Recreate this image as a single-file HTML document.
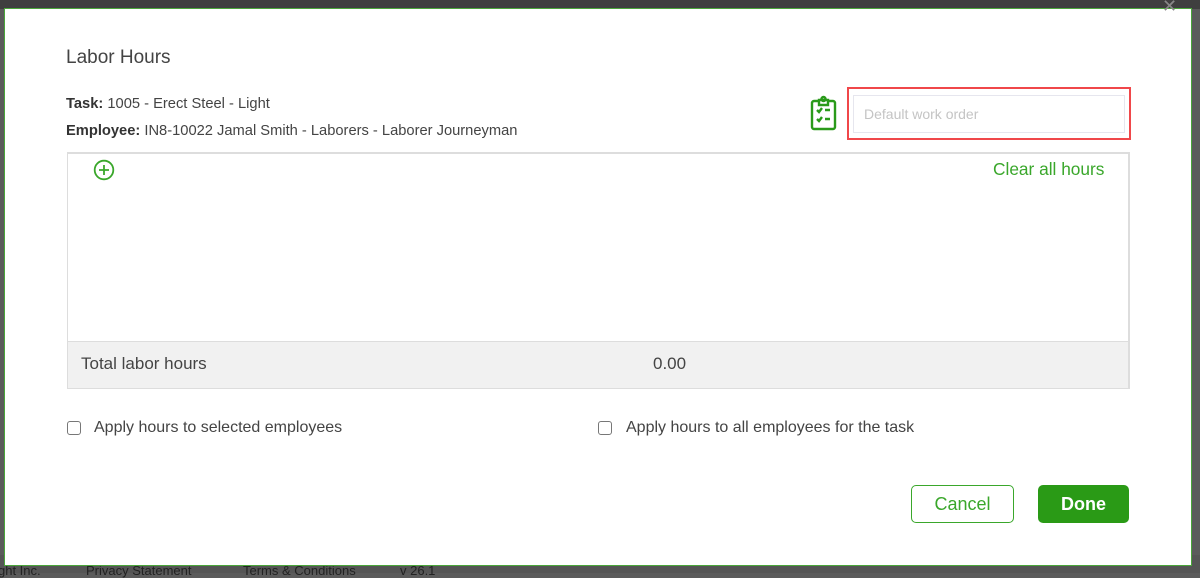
<!DOCTYPE html>
<html><head><meta charset="utf-8"><style>
*{margin:0;padding:0;box-sizing:border-box}
body{width:1200px;height:573px;background:#5b5b5b;position:relative;overflow:hidden;font-family:"Liberation Sans",sans-serif;color:#444}
.top{position:absolute;left:0;top:0;width:1200px;height:9px;background:#3f3f3f}
.modal{position:absolute;left:4px;top:8px;width:1188px;height:558px;background:#fff;border:1px solid #4aa63a}
.abs{position:absolute}
</style></head><body>
<div class="top"></div>
<div class="abs" style="left:0;top:555px;width:1200px;height:18px;background:#555;font-size:13px;color:#222">
<span class="abs" style="left:-2px;top:8px">ght Inc.</span><span class="abs" style="left:86px;top:8px">Privacy Statement</span><span class="abs" style="left:243px;top:8px">Terms &amp; Conditions</span><span class="abs" style="left:400px;top:8px">v 26.1</span></div>
<div class="modal"></div>
<div class="abs" style="left:1162px;top:-4px;color:#888;font-size:18px">✕</div>
<div class="abs" style="left:66px;top:47px;font-size:19px;color:#444">Labor Hours</div>
<div class="abs" style="left:66px;top:96px;font-size:14.7px"><b style="color:#333">Task:</b> 1005 - Erect Steel - Light</div>
<div class="abs" style="left:66px;top:123px;font-size:14.7px"><b style="color:#333">Employee:</b> IN8-10022 Jamal Smith - Laborers - Laborer Journeyman</div>
<svg class="abs" style="left:810px;top:95px" width="28" height="36" viewBox="0 0 28 36" fill="none" stroke="#2a9a1a" stroke-width="2.4">
<rect x="2" y="6" width="23" height="28" rx="2"/><path d="M9 5h9v5H9z" fill="#fff"/><circle cx="13.5" cy="4" r="2"/>
<path d="M7 15l2 2 3-4M7 24l2 2 3-4M15 15h5M15 24h5"/></svg>
<div class="abs" style="left:847px;top:87px;width:284px;height:53px;border:2px solid #f0474a"></div>
<div class="abs" style="left:853px;top:95px;width:272px;height:38px;border:1px solid #e6e6ee;font-size:14px;color:#c4c4c4;padding:10px 0 0 10px">Default work order</div>
<div class="abs" style="left:67px;top:152px;width:1063px;height:237px;border:1px solid #ddd;border-width:2px 2px 1px 1px"></div>
<svg class="abs" style="left:93px;top:159px" width="22" height="22" viewBox="0 0 22 22" fill="none" stroke="#3aa72b" stroke-width="1.8"><circle cx="11" cy="11" r="9.3"/><path d="M11 6v10M6 11h10"/></svg>
<div class="abs" style="left:993px;top:159px;font-size:17.3px;color:#3aa72b">Clear all hours</div>
<div class="abs" style="left:68px;top:341px;width:1060px;height:47px;background:#f1f1f1;border-top:1px solid #ddd"></div>
<div class="abs" style="left:81px;top:354px;font-size:17px;color:#444">Total labor hours</div>
<div class="abs" style="left:653px;top:354px;font-size:17px;color:#444">0.00</div>
<div class="abs" style="left:67px;top:421px;width:14px;height:14px;border:1.5px solid #777;border-radius:3px"></div>
<div class="abs" style="left:94px;top:419px;font-size:16px">Apply hours to selected employees</div>
<div class="abs" style="left:598px;top:421px;width:14px;height:14px;border:1.5px solid #777;border-radius:3px"></div>
<div class="abs" style="left:626px;top:419px;font-size:16px">Apply hours to all employees for the task</div>
<div class="abs" style="left:911px;top:485px;width:103px;height:38px;border:1px solid #3aa72b;border-radius:5px;color:#3aa72b;font-size:18px;text-align:center;line-height:36px">Cancel</div>
<div class="abs" style="left:1038px;top:485px;width:91px;height:38px;background:#2a9a16;border-radius:5px;color:#fff;font-size:18px;font-weight:bold;text-align:center;line-height:38px">Done</div>
</body></html>
